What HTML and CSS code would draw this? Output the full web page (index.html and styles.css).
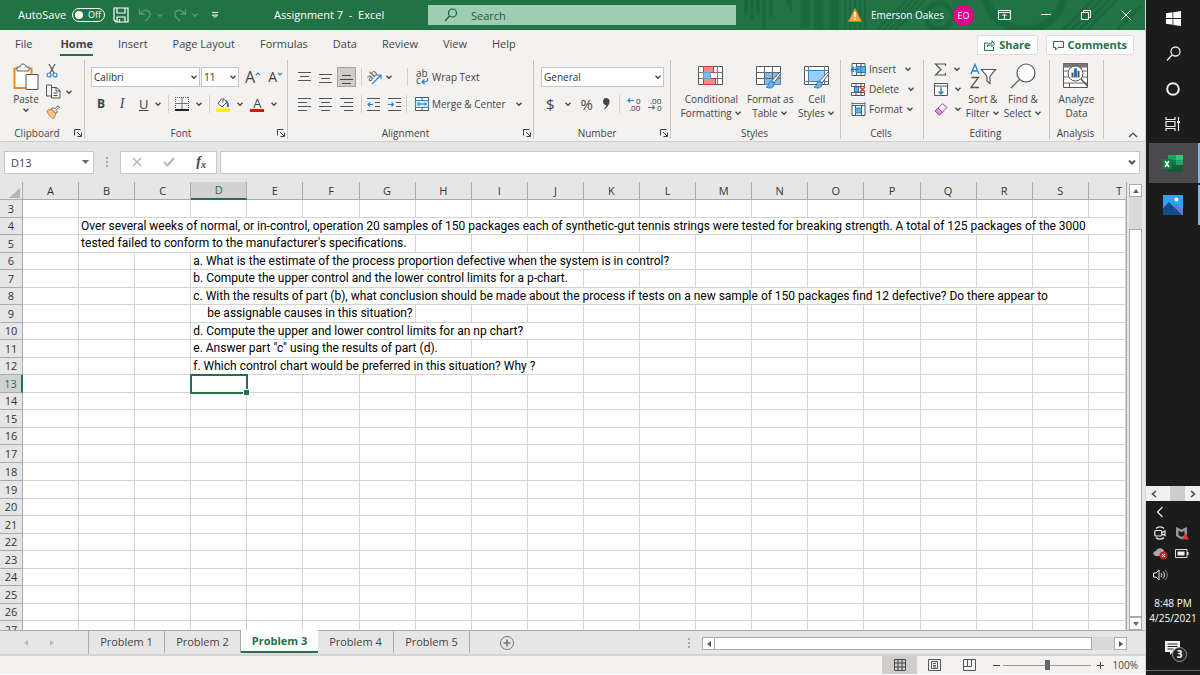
FILE: index.html
```html
<!DOCTYPE html>
<html lang="en">
<head>
<meta charset="utf-8">
<title>Assignment 7 - Excel</title>
<link rel="stylesheet" href="styles.css">
</head>
<body>
<svg class="defs" aria-hidden="true">
  <symbol id="chev" viewBox="0 0 8 8"><path d="M1.5 2.8 4 5.3 6.500 2.800" fill="none" stroke="currentColor" stroke-width="1.300"/></symbol>
  <symbol id="launch" viewBox="0 0 8 8"><path d="M.5 6.500V.5H6.500M3 3l4 4M7.500 3.500v4h-4" fill="none" stroke="currentColor"/></symbol>
  <symbol id="brush" viewBox="0 0 16 18"><path d="M15 1 7 9.500 9 12 16 2.500z" fill="#fff" stroke="#555"/><path d="M6.500 10c-3 0-2 5-5.500 6 4 2 8 1 8-3.500z" fill="#6fb1e8" stroke="#2078c0"/></symbol>
</svg>
<div class="desktop">
<div class="excel">
  <header class="title">
    <svg class="decor" viewBox="0 0 400 30" aria-hidden="true" fill="none" stroke="#1d673f">
      <path stroke-width="4" d="M5 0V15M11 0V20M17 0V15M23 0V29M30 0V17"/>
      <path d="M44 0 51 12V0z" fill="#1d673f" stroke="none"/>
      <path stroke-width="9" d="M64 0V28M78 0V30M93 0V30"/>
      <path stroke-width="2" d="M104 0V30M109 0V30M114 0V30M119 0V30M124 0V30"/>
      <path stroke-width="2" d="M136 30 166 0M142 30 172 0M148 30 178 0M154 30 184 0"/>
      <circle cx="198" cy="16" r="13" stroke-width="5"/><circle cx="198" cy="16" r="4" stroke-width="3"/>
      <circle cx="284" cy="-10" r="40" stroke-width="8"/>
      <path stroke-width="3" d="M322 30 352 0M330 30 360 0M338 30 368 0M346 30 376 0M376 30 400 6"/>
    </svg>
    <label class="autosave">AutoSave <input type="checkbox" class="sr"><span class="toggle"><i></i>Off</span></label>
    <button class="tb save" aria-label="Save"><svg width="16" height="16" viewBox="0 0 16 16" fill="none" stroke="currentColor" stroke-width="1.200"><path d="M1 1h14v14H3l-2-2zM4 1v5h8V1M4 15v-5h8v5M6.500 15v-3"/></svg></button>
    <button class="tb dim undo" aria-label="Undo"><svg width="14" height="14" viewBox="0 0 14 14" fill="none" stroke="currentColor" stroke-width="1.300"><path d="M1.500 1v5h5M2 6C5 2 9 1 11.500 4c2 3 0 5-4.500 9"/></svg><svg width="8" height="8"><use href="#chev"/></svg></button>
    <button class="tb dim redo" aria-label="Redo"><svg width="14" height="14" viewBox="0 0 14 14" fill="none" stroke="currentColor" stroke-width="1.300"><path d="M12.500 1v5h-5M12 6C9 2 5 1 2.500 4c-2 3 0 5 4.500 9"/></svg><svg width="8" height="8"><use href="#chev"/></svg></button>
    <button class="tb more" aria-label="Customize Quick Access Toolbar"><svg width="8" height="8" viewBox="0 0 8 8" fill="none" stroke="currentColor"><path d="M1 1.500h6M1.500 4 4 6.500 6.500 4z"/></svg></button>
    <h1>Assignment 7&nbsp; - &nbsp;Excel</h1>
    <label class="search"><svg width="14" height="14" viewBox="0 0 14 14" fill="none" stroke="#17633a" stroke-width="1.200"><circle cx="8.500" cy="5" r="4"/><path d="M5.500 8 1 13"/></svg><input type="text" placeholder="Search" aria-label="Search"></label>
    <div class="account">
      <svg width="14" height="14" viewBox="0 0 14 14"><path d="M7 .5 13.500 13.500H.5z" fill="#f7a34a" stroke="#e2711d"/><path d="M7 4v5M7 10.500v1.500" stroke="#fff" stroke-width="1.600"/></svg>
      <span>Emerson Oakes</span>
      <span class="avatar">EO</span>
    </div>
    <div class="winbtns">
      <button class="tb" aria-label="Ribbon Display Options"><svg width="13" height="11" viewBox="0 0 13 11" fill="none" stroke="currentColor"><path d="M.5.5h12v9H.5zM.5 2.500h12M6.500 9V4.500M4.500 6l2-2 2 2"/></svg></button>
      <button class="tb" aria-label="Minimize"><svg width="10" height="10" viewBox="0 0 10 10" stroke="currentColor"><path d="M0 4.500h10"/></svg></button>
      <button class="tb" aria-label="Restore"><svg width="10" height="10" viewBox="0 0 10 10" fill="none" stroke="currentColor"><path d="M.5 2.500h7v7h-7zM2.500 2.500v-2h7v7h-2"/></svg></button>
      <button class="tb" aria-label="Close"><svg width="10" height="10" viewBox="0 0 10 10" stroke="currentColor"><path d="M.5.5l9 9M9.500.5l-9 9"/></svg></button>
    </div>
  </header>

  <nav class="menu">
    <button class="file">File</button><button class="on">Home</button><button>Insert</button><button>Page Layout</button><button>Formulas</button><button>Data</button><button>Review</button><button>View</button><button>Help</button>
    <span class="grow"></span>
    <button class="act"><svg width="11" height="11" viewBox="0 0 11 11" fill="none" stroke="currentColor"><path d="M4 3H.5v7.500h9V7M3 7c.5-3 2-4 5-4V.8L10.500 4 8 6.500V5C6 5 4.500 5 3 7z"/></svg>Share</button>
    <button class="act"><svg width="11" height="11" viewBox="0 0 11 11" fill="none" stroke="currentColor"><path d="M.5 1.500h10v6H5l-2.500 2.500V7.500h-2z"/></svg>Comments</button>
  </nav>

  <section class="ribbon">
    <div class="group g-clip">
      <div class="body clip">
        <button class="big"><svg width="26" height="28" viewBox="0 0 26 28" fill="none"><path d="M1.500 5.500h17V25h-17z" fill="#fff" stroke="#e88b1c" stroke-width="2"/><path d="M4 8V4h3c0-4 6-4 6 0h3v4z" fill="#f3f2f1" stroke="#666"/><path d="M13 11.500h12v15H13z" fill="#fff" stroke="#555"/></svg><span>Paste</span><svg width="8" height="8"><use href="#chev"/></svg></button>
        <div class="stack">
          <button aria-label="Cut"><svg width="12" height="15" viewBox="0 0 12 15" fill="none"><path d="M3 1l5 9M9 1l-5 9" stroke="#555" stroke-width="1.200"/><circle cx="3" cy="12" r="2" stroke="#2a86cf" stroke-width="1.200"/><circle cx="9" cy="12" r="2" stroke="#2a86cf" stroke-width="1.200"/></svg></button>
          <button aria-label="Copy"><svg width="15" height="15" viewBox="0 0 15 15" fill="#f3f2f1" stroke="#555"><path d="M.5 1h5v11h-5zM5.500 3.500h5l3.500 3V14H5.500zM10 3.500v3.500h4M7.500 9h4M7.500 11.500h4"/></svg><svg class="gap near" width="8" height="8"><use href="#chev"/></svg></button>
          <button aria-label="Format Painter"><svg width="14" height="14" viewBox="0 0 14 14"><path d="M1 5.500 6 4l4 4-2 5.500C5 13 2 10 1 5.500z" fill="#f9c48a" stroke="#e2811d"/><path d="M5.500 4 10 8.500 11.500 7 10 5.500 13.500 2 12 .8 8.500 4 7 2.500z" fill="#fff" stroke="#555"/></svg></button>
        </div>
      </div>
      <div class="name"><span>Clipboard</span><button aria-label="Clipboard settings"><svg width="8" height="8"><use href="#launch"/></svg></button></div>
    </div>

    <div class="group g-font">
      <div class="body rows">
        <div class="row fr1">
          <span class="sel s-font"><select aria-label="Font"><option>Calibri</option></select><svg width="8" height="8"><use href="#chev"/></svg></span>
          <span class="sel s-size"><select aria-label="Font size"><option>11</option></select><svg width="8" height="8"><use href="#chev"/></svg></span>
          <button class="lg" aria-label="Increase font size"><span>A</span><svg width="6" height="12" viewBox="0 0 6 12" fill="none" stroke="#2a86cf" stroke-width="1.200"><path d="M1 4l2-2 2 2"/></svg></button>
          <button class="md" aria-label="Decrease font size"><span>A</span><svg width="6" height="12" viewBox="0 0 6 12" fill="none" stroke="#2a86cf" stroke-width="1.200"><path d="M1 2l2 2 2-2"/></svg></button>
        </div>
        <div class="row fr2">
          <button class="b">B</button><button class="i">I</button><button><u>U</u></button><button aria-label="Underline options"><svg width="8" height="8"><use href="#chev"/></svg></button>
          <i class="sep"></i>
          <button aria-label="Borders"><svg width="14" height="14" viewBox="0 0 14 14" fill="none" stroke="#555"><path d="M.5 0v13M13.500 0v13M0 .5h14" stroke-dasharray="1 1"/><path d="M7 0v13M0 6.500h14" stroke="#777"/><path d="M0 13h14" stroke="#222" stroke-width="2"/></svg></button><button aria-label="Border options"><svg width="8" height="8"><use href="#chev"/></svg></button>
          <i class="sep"></i>
          <button aria-label="Fill color"><svg width="14" height="15" viewBox="0 0 14 15" fill="none"><path d="M6 1.500 2 6.500l4 3.500 5-5-4-3.500v4" fill="#fff" stroke="#555"/><path d="M10 4c2 1 2 3 2 6" stroke="#2a72b8" stroke-width="2"/><path d="M0 11.500h14v3.500H0z" fill="#fff200"/></svg></button><button aria-label="Fill options"><svg width="8" height="8"><use href="#chev"/></svg></button>
          <button class="fc" aria-label="Font color"><span>A</span></button><button aria-label="Font color options"><svg width="8" height="8"><use href="#chev"/></svg></button>
        </div>
      </div>
      <div class="name"><span>Font</span><button aria-label="Font settings"><svg width="8" height="8"><use href="#launch"/></svg></button></div>
    </div>

    <div class="group g-align">
      <div class="body rows">
        <div class="row al">
          <button aria-label="Top align"><svg width="13" height="13" viewBox="0 0 13 13" stroke="#555"><path d="M0 1.500h13M2 5.500h9M0 9.500h13"/></svg></button>
          <button aria-label="Middle align"><svg width="13" height="13" viewBox="0 0 13 13" stroke="#555"><path d="M0 3.500h13M2 7.500h9M0 11.500h13"/></svg></button>
          <button class="pressed" aria-label="Bottom align"><svg width="13" height="13" viewBox="0 0 13 13" stroke="#444"><path d="M2 4.500h9M0 8.500h13M2 12.500h9"/></svg></button>
          <i class="sep"></i>
          <button aria-label="Orientation"><svg width="16" height="16" viewBox="0 0 16 16" fill="none"><text x="0" y="10" font-size="10" fill="#444" transform="rotate(-45 5 8)">ab</text><path d="M5 15 14 6M10 6h4v4" stroke="#2a86cf" stroke-width="1.200"/></svg></button><button aria-label="Orientation options"><svg width="8" height="8"><use href="#chev"/></svg></button>
          <i class="sep s2"></i>
          <button class="txt wrap"><svg width="13" height="16" viewBox="0 0 13 16" fill="none"><text x="0" y="8" font-size="10" fill="#444">ab</text><text x="0" y="15" font-size="10" fill="#444">c</text><path d="M11.500 9c1 4-2 4-5 4M8.500 10.500 6 13l2.500 2" stroke="#2a86cf" stroke-width="1.300"/></svg>Wrap Text</button>
        </div>
        <div class="row al">
          <button aria-label="Align left"><svg width="13" height="13" viewBox="0 0 13 13" stroke="#555"><path d="M0 .5h13M0 4.500h9M0 8.500h13M0 12.500h9"/></svg></button>
          <button aria-label="Center"><svg width="13" height="13" viewBox="0 0 13 13" stroke="#555"><path d="M0 .5h13M2 4.500h9M0 8.500h13M2 12.500h9"/></svg></button>
          <button aria-label="Align right"><svg width="13" height="13" viewBox="0 0 13 13" stroke="#555"><path d="M0 .5h13M4 4.500h9M0 8.500h13M4 12.500h9"/></svg></button>
          <i class="sep"></i>
          <button aria-label="Decrease indent"><svg width="14" height="13" viewBox="0 0 14 13" fill="none" stroke="#555"><path d="M0 .5h13M8 4.500h5M8 8.500h5M0 12.500h13"/><path d="M6 6.500H1M3 4.500l-2 2 2 2" stroke="#2a86cf" stroke-width="1.200"/></svg></button>
          <button class="ind" aria-label="Increase indent"><svg width="14" height="13" viewBox="0 0 14 13" fill="none" stroke="#555"><path d="M0 .5h13M8 4.500h5M8 8.500h5M0 12.500h13"/><path d="M0 6.500h5.500M3.500 4.500l2 2-2 2" stroke="#2a86cf" stroke-width="1.200"/></svg></button>
          <i class="sep s3"></i>
          <button class="txt"><svg width="14" height="14" viewBox="0 0 14 14" fill="none"><path d="M.5.5h13v13H.5zM7 .5v13" fill="#fff" stroke="#555"/><path d="M.5 3.500h13v7H.5z" fill="#d6eafa" stroke="#2a86cf"/><path d="M2.500 7h9M4.500 5l-2 2 2 2M9.500 5l2 2-2 2" stroke="#2078c0"/></svg>Merge &amp; Center<svg class="gap" width="8" height="8"><use href="#chev"/></svg></button>
        </div>
      </div>
      <div class="name"><span>Alignment</span><button aria-label="Alignment settings"><svg width="8" height="8"><use href="#launch"/></svg></button></div>
    </div>

    <div class="group g-num">
      <div class="body rows">
        <div class="row"><span class="sel s-num"><select aria-label="Number format"><option>General</option></select><svg width="8" height="8"><use href="#chev"/></svg></span></div>
        <div class="row nr">
          <button class="sym">$</button><button aria-label="Currency options"><svg width="8" height="8"><use href="#chev"/></svg></button><button class="sym">%</button><button aria-label="Comma style"><svg width="8" height="12" viewBox="0 0 8 12"><path d="M4 0c4 0 4 4 3 6S3.500 11 1.500 12C3.500 9 4.500 8 4 7 0 7 0 0 4 0z" fill="#444"/></svg></button>
          <i class="sep"></i>
          <button aria-label="Increase decimal"><svg width="14" height="16" viewBox="0 0 14 16" fill="none"><text x="9" y="8" font-size="8" fill="#333">0</text><text x="2" y="15" font-size="8" fill="#333">.00</text><path d="M7 4.500H1M3 2.500l-2 2 2 2" stroke="#2a86cf" stroke-width="1.200"/></svg></button>
          <button aria-label="Decrease decimal"><svg width="14" height="16" viewBox="0 0 14 16" fill="none"><text x="2" y="8" font-size="8" fill="#333">.00</text><text x="9" y="15" font-size="8" fill="#333">0</text><path d="M0 11.500h6.500M4.500 9.500l2 2-2 2" stroke="#2a86cf" stroke-width="1.200"/></svg></button>
        </div>
      </div>
      <div class="name"><span>Number</span><button aria-label="Number settings"><svg width="8" height="8"><use href="#launch"/></svg></button></div>
    </div>

    <div class="group g-style">
      <div class="body bigs">
        <button class="big"><svg width="26" height="24" viewBox="0 0 26 24" fill="none"><path d="M.5 1.500h24v18H.5z" fill="#fff" stroke="#555"/><path d="M.5 7.500h24M.5 13.500h24M5.500 1v19M19.500 1v19" stroke="#777"/><path d="M5.500 1.500h10v6h-10zM5.500 13.500h12v6h-12z" fill="#f98b8b" stroke="#e0352f"/><path d="M5.500 7.500h7v6h-7z" fill="#7cc0f3" stroke="#5fa6d8"/></svg><span>Conditional<br>Formatting <svg width="8" height="8"><use href="#chev"/></svg></span></button>
        <button class="big"><svg width="28" height="24" viewBox="0 0 28 24" fill="none"><path d="M.5 1.500h24v18H.5z" fill="#fff" stroke="#555"/><path d="M8.500 7.500h16v12h-16z" fill="#7cbcf0"/><path d="M.5 7.500h24M.5 13.500h24M8.500 1v19M16.500 1v19" stroke="#666"/><use href="#brush" x="8" y="6" width="18" height="18"/></svg><span>Format as<br>Table <svg width="8" height="8"><use href="#chev"/></svg></span></button>
        <button class="big"><svg width="28" height="24" viewBox="0 0 28 24" fill="none"><path d="M1.500 1.500h24v18h-24z" fill="#fff" stroke="#555"/><path d="M1 5.500h25M1 16.500h25M5.500 1v19M21.500 1v19" stroke="#777"/><path d="M5.500 5.500h16v11h-16z" fill="#9acdf5" stroke="#2a86cf"/><use href="#brush" x="9" y="6" width="18" height="18"/></svg><span>Cell<br>Styles <svg width="8" height="8"><use href="#chev"/></svg></span></button>
      </div>
      <div class="name"><span>Styles</span></div>
    </div>

    <div class="group g-cells">
      <div class="body list">
        <button class="txt"><svg width="15" height="13" viewBox="0 0 15 13" fill="none"><path d="M1 .5h13v12H1zM5.500.5v12M10 .5v12" fill="#fff" stroke="#555"/><path d="M5 3.500h9.500v6H5z" fill="#5fb0ee" stroke="#2078c0"/><path d="M10 3.500v6" stroke="#2078c0"/><path d="M0 6.500h8M3 4 .5 6.500 3 9" stroke="#2078c0" stroke-width="1.300"/></svg>Insert<svg class="gap wide" width="8" height="8"><use href="#chev"/></svg></button>
        <button class="txt"><svg width="15" height="13" viewBox="0 0 15 13" fill="none"><path d="M.5.5h13v3H.5zM.5 9.500h13v3H.5zM5 .5v3M10 .5v3M5 9.500v3M10 9.500v3" fill="#fff" stroke="#555"/><path d="M3.500 4h4v5h-4z" fill="#5fb0ee" stroke="#2078c0"/><path d="M9 4l5 5M14 4 9 9" stroke="#e0352f" stroke-width="1.400"/></svg>Delete<svg class="gap wide" width="8" height="8"><use href="#chev"/></svg></button>
        <button class="txt"><svg width="15" height="14" viewBox="0 0 15 14" fill="none"><path d="M1 3.500h13v10H1zM4.500 3.500v10M10.500 3.500v10" fill="#fff" stroke="#555"/><path d="M4.500 6h6v5h-6z" fill="#5fb0ee" stroke="#2078c0"/><path d="M1 1.500h13M1 0v3M14 0v3" stroke="#2a86cf"/></svg>Format<svg width="8" height="8"><use href="#chev"/></svg></button>
      </div>
      <div class="name"><span>Cells</span></div>
    </div>

    <div class="group g-edit">
      <div class="body bigs">
        <div class="list tools">
          <button aria-label="AutoSum"><svg width="13" height="13" viewBox="0 0 13 13" fill="none" stroke="#555" stroke-width="1.200"><path d="M11.500 3V1H1.500L7 6.500 1.500 12h10v-2"/></svg><svg width="8" height="8"><use href="#chev"/></svg></button>
          <button aria-label="Fill"><svg width="14" height="13" viewBox="0 0 14 13" fill="none"><path d="M.5.5h13v12H.5zM.5 3h13" fill="#fff" stroke="#555"/><path d="M7 4v7M4.500 8.500 7 11l2.500-2.500" stroke="#2078c0" stroke-width="1.300"/></svg><svg width="8" height="8"><use href="#chev"/></svg></button>
          <button aria-label="Clear"><svg width="14" height="13" viewBox="0 0 14 13"><path d="M1 8 8.500.8 13 4.500 5.500 12z" fill="#fff" stroke="#9b3fa8"/><path d="M1 8l3-3 4.500 4-3 3z" fill="#d79be0" stroke="#9b3fa8"/></svg><svg width="8" height="8"><use href="#chev"/></svg></button>
        </div>
        <button class="big"><svg width="26" height="26" viewBox="0 0 26 26" fill="none" stroke="#555"><path d="M1 11 5 1.500 9 11M2.500 8h5" stroke="#2a86cf" stroke-width="1.300"/><path d="M1.500 14.500h7L1 24.500h8" stroke-width="1.300"/><path d="M11.500 6.500h14l-5.500 7v7l-3-2.500v-4.500z" fill="#fff" stroke-width="1.200"/></svg><span>Sort &amp;<br>Filter <svg width="8" height="8"><use href="#chev"/></svg></span></button>
        <button class="big"><svg width="28" height="26" viewBox="0 0 28 26" fill="none" stroke="#555" stroke-width="1.200"><circle cx="17" cy="10" r="9" fill="#fff"/><path d="M10.500 16.500 2 25"/></svg><span>Find &amp;<br>Select <svg width="8" height="8"><use href="#chev"/></svg></span></button>
      </div>
      <div class="name"><span>Editing</span></div>
    </div>

    <div class="group g-ana">
      <div class="body bigs">
        <button class="big"><svg width="26" height="26" viewBox="0 0 26 26" fill="none"><path d="M.5.5h24v24H.5z" fill="#fff" stroke="#555"/><path d="M.5 2.500h24" stroke="#777" stroke-width="4"/><path d="M.5 8h24M.5 14h24M.5 20h24M6.500 20v5M18.500 4v4" stroke="#666"/><circle cx="12.500" cy="10.500" r="7.500" fill="#fff" stroke="#555"/><path d="M9.500 9.500v5" stroke="#555" stroke-width="2"/><path d="M12.500 5.500v9" stroke="#2078c0" stroke-width="3"/><path d="M15.500 8v6.500" stroke="#555" stroke-width="2"/><path d="M18 16l6.500 7" stroke="#555" stroke-width="1.500"/></svg><span>Analyze<br>Data</span></button>
      </div>
      <div class="name"><span>Analysis</span></div>
    </div>
    <button class="collapse" aria-label="Collapse the Ribbon"><svg width="10" height="8" viewBox="0 0 10 8" fill="none" stroke="#444" stroke-width="1.200"><path d="M1 6l4-4 4 4"/></svg></button>
  </section>

  <section class="fbar">
    <div class="namebox"><input type="text" value="D13" aria-label="Name box"><svg width="8" height="5" viewBox="0 0 8 5"><path d="M1 0h7L4.500 4z" fill="#666"/></svg></div>
    <span class="dots"></span>
    <div class="fx">
      <button aria-label="Cancel"><svg width="10" height="10" viewBox="0 0 10 10" stroke="#b5b5b5" stroke-width="1.500"><path d="M1 1l8 8M9 1 1 9"/></svg></button>
      <button aria-label="Enter"><svg width="12" height="10" viewBox="0 0 12 10" fill="none" stroke="#b5b5b5" stroke-width="2"><path d="M1 5l3.500 3.500L11 1"/></svg></button>
      <button class="fn" aria-label="Insert function">f<small>x</small></button>
    </div>
    <div class="formula"><input type="text" aria-label="Formula bar"><svg width="8" height="8" viewBox="0 0 8 8"><path d="M1 2.500 4 5.500l3-3" fill="none" stroke="#555" stroke-width="2"/></svg></div>
  </section>

  <main class="sheet">
    <div class="gridwrap"><table class="grid" id="grid"></table></div>
    <div class="vscroll">
      <button aria-label="Scroll up"><svg width="6" height="4"><path d="M0 4h6L3 0z" fill="#666"/></svg></button>
      <div class="vtrack"><div class="vthumb"></div></div>
      <button aria-label="Scroll down"><svg width="6" height="4"><path d="M0 0h6L3 4z" fill="#666"/></svg></button>
    </div>
  </main>

  <footer class="tabs">
    <div class="arrows"><button aria-label="Previous sheet"><svg width="4" height="6"><path d="M4 0v6L0 3z" fill="#b8b8b8"/></svg></button><button aria-label="Next sheet"><svg width="4" height="6"><path d="M0 0v6l4-3z" fill="#b8b8b8"/></svg></button></div>
    <button class="tab">Problem 1</button><button class="tab">Problem 2</button><button class="tab on">Problem 3</button><button class="tab">Problem 4</button><button class="tab">Problem 5</button>
    <button class="add" aria-label="New sheet"><svg width="14" height="14" viewBox="0 0 14 14" fill="none" stroke="#777"><circle cx="7" cy="7" r="6.500"/><path d="M3.500 7h7M7 3.500v7" stroke-width="1.600"/></svg></button>
    <span class="grow"></span>
    <span class="dots"></span>
    <div class="hscroll"><button aria-label="Scroll left"><svg width="4" height="6"><path d="M4 0v6L0 3z" fill="#555"/></svg></button><div class="hthumb"></div><span class="htrack"></span><button aria-label="Scroll right"><svg width="4" height="6"><path d="M0 0v6l4-3z" fill="#555"/></svg></button></div>
  </footer>

  <div class="status">
    <button class="view on" aria-label="Normal"><svg width="12" height="12" viewBox="0 0 12 12" fill="none" stroke="#444"><path d="M.5.5h11v11H.5zM4 0v12M8 0v12M0 4h12M0 8h12"/></svg></button>
    <button class="view" aria-label="Page Layout"><svg width="13" height="12" viewBox="0 0 13 12" fill="none" stroke="#555"><path d="M.5.5h12v11H.5zM3.500 2.500h6v7h-6zM5 4.500h3M5 6.500h3M5 8h3"/></svg></button>
    <button class="view" aria-label="Page Break Preview"><svg width="13" height="12" viewBox="0 0 13 12" fill="none" stroke="#555"><path d="M.5.5h12v11H.5zM.5 7.500h8V.5M4.500 0v7"/></svg></button>
    <button class="zm" aria-label="Zoom out"><svg width="7" height="7"><path d="M0 3.500h7" stroke="#444"/></svg></button>
    <input type="range" aria-label="Zoom" min="0" max="100" value="50">
    <button class="zm" aria-label="Zoom in"><svg width="7" height="7"><path d="M0 3.500h7M3.500 0v7" stroke="#444"/></svg></button>
    <span class="pct">100%</span>
  </div>
</div>

<aside class="taskbar">
  <button class="task" aria-label="Start"><svg width="15" height="15" viewBox="0 0 15 15" fill="#fff"><path d="M0 2.200 6.500 1.300V7H0zM7.300 1.200 15 0v7H7.300zM0 8h6.500v5.700L0 12.800zM7.300 8H15v7l-7.700-1.100z"/></svg></button>
  <button class="task" aria-label="Search"><svg width="15" height="15" viewBox="0 0 15 15" fill="none" stroke="#eee" stroke-width="1.300"><circle cx="9.500" cy="5.500" r="4.500"/><path d="M6 9 1 14.500"/></svg></button>
  <button class="task" aria-label="Cortana"><svg width="14" height="14" viewBox="0 0 14 14" fill="none" stroke="#eee" stroke-width="2"><circle cx="7" cy="7" r="5.800"/></svg></button>
  <button class="task" aria-label="Task View"><svg width="16" height="14" viewBox="0 0 16 14" fill="none" stroke="#eee" stroke-width="1.200"><path d="M1 4.500h9v5H1zM1 0v2.500h9V0M1 14v-2.500h9V14M13.500 0v14"/><path d="M12 5h3" stroke-width="2"/></svg></button>
  <button class="task app on" aria-label="Excel"><svg width="21" height="19" viewBox="0 0 21 19"><path d="M6 1h15v17H6z" fill="#185c37"/><path d="M6 1h8v9H6z" fill="#21a366"/><path d="M14 1h7v5h-7z" fill="#33c481"/><path d="M14 6h7v5h-7z" fill="#21a366"/><path d="M6 6h8v5H6z" fill="#107c41"/><path d="M0 5h10v10H0z" fill="#107c41"/><path d="M3 7l4 6M7 7l-4 6" stroke="#fff" stroke-width="1.500"/></svg></button>
  <button class="task app" aria-label="Photos"><svg width="20" height="20" viewBox="0 0 20 20"><path d="M0 0h20v20H0z" fill="#2ba5f0"/><path d="M10 13l4-4 6 6v5H8z" fill="#6a74d8"/><path d="M0 13 6 7l13 13H0z" fill="#134a8e"/><circle cx="13.500" cy="4.500" r="2" fill="#fff"/></svg></button>
  <span class="grow"></span>
  <div class="pan"><button aria-label="Pan left"><svg width="6" height="8" viewBox="0 0 6 8" fill="none" stroke="#444" stroke-width="1.500"><path d="M5 1 1.500 4 5 7"/></svg></button><i></i><button aria-label="Pan right"><svg width="6" height="8" viewBox="0 0 6 8" fill="none" stroke="#444" stroke-width="1.500"><path d="M1 1l3.500 3L1 7"/></svg></button></div>
  <div class="tray">
    <button aria-label="Hidden icons"><svg width="12" height="12" viewBox="0 0 12 12" fill="none" stroke="#eee" stroke-width="1.200"><path d="M8.500 1 3.500 6l5 5"/></svg></button><i></i>
    <button aria-label="Meet Now"><svg width="12" height="14" viewBox="0 0 12 14" fill="none" stroke="#eee" stroke-width="1.200"><rect x=".8" y="4.500" width="7" height="5.500" rx="1"/><path d="M8 6.500l3-1.500v4.500L8 8M2 2.500C4 .3 8 .3 10 2.500M2 11.500c2 2.200 6 2.200 8 0"/></svg></button>
    <button aria-label="McAfee"><svg width="14" height="14" viewBox="0 0 14 14"><path d="M1 1l5.500 2.500L12 1v9l-5.500 3.500L1 10zM3.500 4.800V9l3 2 3-2V4.800l-3 1.400z" fill="#999" fill-rule="evenodd"/><path d="M10.500 7 14 13.500H7z" fill="#f02c2c"/></svg></button>
    <button aria-label="OneDrive"><svg width="15" height="13" viewBox="0 0 15 13"><path d="M3 9C-1 8 0 4 3 4c2-4 7-3 8 0v5z" fill="#aaa"/><circle cx="10.500" cy="8.500" r="4" fill="#e81123"/><path d="M9 7l3 3M12 7 9 10" stroke="#fff"/></svg></button>
    <button aria-label="Battery"><svg width="14" height="9" viewBox="0 0 14 9"><path d="M.5.5h11.500v8H.5z" fill="none" stroke="#ddd"/><path d="M2.500 2.500h7v4h-7zM12 3h1.500v3H12z" fill="#eee"/></svg></button>
    <button aria-label="Volume"><svg width="15" height="12" viewBox="0 0 15 12" fill="none" stroke="#eee"><path d="M.5 4h2.500l3-3v10L3 8H.5zM8 4c1 1 1 3 0 4M10 2.500c2 2 2 5 0 7"/><path d="M12 1c3 3 3 7 0 10" stroke="#888"/></svg></button><i></i>
  </div>
  <div class="clock"><span>8:48 PM</span><span>4/25/2021</span></div>
  <button class="notes" aria-label="Notifications"><svg width="16" height="14" viewBox="0 0 16 14"><path d="M0 0h15v11H8l-3 3v-3H0z" fill="#f4f4f4"/><path d="M2.500 3h10M2.500 5.500h10M2.500 8h6" stroke="#222"/></svg><b>3</b></button>
  <span class="peek"></span>
</aside>
</div>
<script src="script.js"></script>
</body>
</html>
```
FILE: styles.css
```css
* { box-sizing: border-box; }
body { margin: 0; font: 11px/14px "Open Sans", "Noto Sans", sans-serif; color: #444; background: #fff; }
button, input, select { font: inherit; color: inherit; margin: 0; padding: 0; border: 0; background: none; outline: none; border-radius: 0; }
button { display: flex; align-items: center; justify-content: center; white-space: nowrap; flex: none; }
svg { flex: none; display: block; overflow: visible; }
.defs { display: none; }
.sr { position: absolute; opacity: 0; }
.grow { flex: 1; }
.desktop { display: flex; height: 100vh; overflow: hidden; }
.excel { flex: 1; min-width: 0; display: flex; flex-direction: column; border-right: 1px solid #d8d8d8; }

/* title bar */
.title { position: relative; height: 30px; background: #217346; color: #fff; display: flex; align-items: center; flex: none; padding-left: 18px; }
.decor { position: absolute; right: 4px; top: 0; width: 400px; height: 30px; overflow: hidden; }
.title > :not(.decor) { position: relative; }
.autosave { display: flex; align-items: center; gap: 6px; width: 95px; }
.toggle { display: flex; align-items: center; gap: 5px; width: 33px; height: 14px; border: 1px solid #fff; border-radius: 7px; padding-left: 2px; font-size: 9px; }
.toggle i { width: 8px; height: 8px; border-radius: 50%; background: #fff; }
.tb { gap: 4px; }
.tb.dim { color: #5a9a76; }
.undo { margin-left: 9px; }
.redo { margin-left: 9px; }
.more { margin-left: 12px; }
.title h1 { font: inherit; margin: 0 0 0 55px; width: 154px; white-space: nowrap; }
.search { display: flex; align-items: center; gap: 13px; flex: 0 1 308px; height: 20px; padding-left: 16px; background: #9fcdb3; }
.search input { flex: 1; min-width: 0; height: 20px; }
.search input::placeholder { color: #17633a; opacity: 1; }
.account { margin-left: auto; display: flex; align-items: center; gap: 9px; font-size: 10px; }
.avatar { width: 21px; height: 21px; border-radius: 50%; background: #e3008c; font-size: 9px; line-height: 21px; text-align: center; }
.winbtns { display: flex; align-items: center; gap: 30px; padding: 0 14px 0 24px; }

/* ribbon tabs */
.menu { height: 30px; background: #f3f2f1; display: flex; align-items: center; flex: none; padding: 0 11px 0 15px; gap: 25px; }
.menu button { height: 22px; border-bottom: 2px solid transparent; }
.menu .file { margin-right: 3px; }
.menu .on { font-weight: bold; border-color: #217346; color: #444; }
.menu .act { height: 20px; background: #fff; border: 1px solid #e1dfdd; border-radius: 2px; color: #217346; font-weight: bold; gap: 4px; padding: 0 6px; }
.act + .act { margin-left: -17px; }

/* ribbon */
.ribbon { height: 82px; background: #f3f2f1; border-bottom: 1px solid #cfcdcb; display: flex; flex: none; padding-bottom: 2px; font-size: 10px; }
.group { display: flex; flex-direction: column; justify-content: space-between; border-right: 1px solid #c8c6c4; flex: none; }
.g-clip { width: 85px; }
.g-font { width: 203px; }
.g-align { width: 246px; }
.g-num { width: 137px; }
.g-style { width: 170px; }
.g-cells { width: 83px; }
.g-edit { width: 126px; }
.g-ana { width: 54px; }
.name { display: flex; align-items: center; height: 12px; line-height: 12px; padding: 0 2px 0 0; }
.name span { flex: 1; text-align: center; }
.collapse { margin-left: auto; align-self: flex-end; margin-right: 7px; }
.rows { padding-top: 7px; display: flex; flex-direction: column; gap: 7px; }
.row { display: flex; align-items: center; height: 20px; }
.sep { width: 1px; height: 18px; background: #d2d0ce; flex: none; }
.gap { margin-left: 6px; }
.near { margin-left: 4px; }
.wide { margin-left: 5px; }
.txt { gap: 3px; }
.big { flex-direction: column; justify-content: flex-start; line-height: 14px; }
.big span { text-align: center; }
.big span svg { display: inline-block; }
.big > svg + span { margin-top: 3px; }
.clip { display: flex; padding: 3px 0 0 13px; gap: 7px; }
.clip .big > svg + span { margin-top: 1px; }
.stack { display: flex; flex-direction: column; gap: 6px; align-items: flex-start; }
.sel { position: relative; height: 20px; }
.sel select { appearance: none; width: 100%; height: 20px; border: 1px solid #c8c6c4; background: #fff; padding: 0 2px; color: #333; }
.sel svg { position: absolute; right: 2px; top: 6px; pointer-events: none; }
.s-font { width: 109px; }
.s-size { width: 38px; }
.s-num { width: 123px; margin-left: 7px; }
.fr1 { padding-left: 6px; gap: 1px; }
.lg { font-size: 16px; margin-left: 5px; }
.md { font-size: 14px; margin-left: 6px; }
.fr2 { padding-left: 12px; gap: 6px; }
.fr2 .b { font-weight: bold; width: 8px; font-size: 12px; margin-right: 7px; }
.fr2 .i { font: italic 14px "Liberation Serif", serif; width: 8px; margin-right: 7px; }
.fr2 u { font-size: 13px; }
.fc { width: 14px; height: 15px; border-bottom: 3px solid #f00; font-size: 13px; line-height: 12px; }
.al { padding-left: 7px; gap: 2px; }
.al > button:not(.txt) { min-width: 8px; }
.al > button[aria-label*="align"], .al > button[aria-label*="Align"], .al > button[aria-label="Center"] { width: 19px; height: 20px; }
.al .pressed { background: #cfcdcb; border: 1px solid #a5a3a1; }
.al .sep { margin: 0 3px; }
.al .s2 { margin-left: 12px; margin-right: 6px; }
.al .s3 { margin-left: 2px; margin-right: 6px; }
.ind { margin-left: 5px; }
.nr { padding-left: 12px; gap: 9px; }
.nr .sym { font-size: 15px; }
.nr .sep { margin: 0 -2px 0 0; }
.nr .sep ~ button { margin-right: -2px; }
.bigs { display: flex; justify-content: space-evenly; padding-top: 3px; }
.g-style .bigs { padding: 5px 0 0 5px; }
.g-edit .bigs { padding: 3px 3px 0 6px; }
.list { display: flex; flex-direction: column; gap: 6px; align-items: flex-start; }
.g-cells .list { padding-top: 2px; padding-left: 10px; }
.list > button { height: 14px; }
.g-edit .tools { margin-top: -1px; }
.tools > button { gap: 6px; }

/* formula bar */
.fbar { height: 40px; background: #e6e6e6; display: flex; align-items: center; flex: none; padding: 0 5px 0 4px; }
.namebox, .fx, .formula { display: flex; align-items: center; height: 23px; background: #fff; border: 1px solid #c6c6c6; }
.namebox { width: 90px; padding: 0 4px 0 6px; }
.namebox input, .formula input { flex: 1; min-width: 0; height: 20px; }
.dots { width: 2px; height: 10px; border-left: 2px dotted #a8a8a8; margin: 0 12px; }
.fx { width: 97px; justify-content: space-between; padding: 0 10px 0 11px; }
.fn { font: italic bold 14px "Liberation Serif", serif; }
.fn small { font-size: 10px; align-self: flex-end; }
.formula { flex: 1; margin-left: 3px; padding-right: 3px; }

/* sheet */
.sheet { flex: 1; min-height: 0; display: flex; background: #e6e6e6; }
.gridwrap { flex: 1; min-width: 0; overflow: hidden; border-right: 1px solid #ababab; }
.grid { width: 100%; table-layout: fixed; border-collapse: separate; border-spacing: 0; background: #fff; }
.grid th, .grid td { padding: 0; height: 17px; line-height: 16px; border: 0 solid #d4d4d4; border-width: 0 1px 1px 0; }
.grid tbody tr:nth-child(odd) > *, .grid tbody tr:nth-child(16n) > * { height: 18px; line-height: 17px; }
.grid td { font-family: Roboto, sans-serif; font-size: 12px; color: #000; white-space: nowrap; padding-left: 2px; }
.grid .indent { padding-left: 16px; }
.grid th { font-weight: normal; background: #e6e6e6; border-color: #ababab; color: #333; }
.grid thead th { height: 18px; line-height: 16px; }
.grid thead .on { background: #d2d2d2; color: #217346; border-bottom: 2px solid #217346; }
.grid tbody th.on { background: #d2d2d2; color: #217346; border-right: 2px solid #217346; }
.grid .corner { width: 23px; }
.grid .corner svg { margin: 4px 0 0 9px; }
.grid .last { width: 37px; border-right: 0; text-align: right; padding-right: 4px; }
.grid .cur { position: relative; outline: 2px solid #217346; outline-offset: -1px; }
.grid .cur::after { content: ""; position: absolute; right: -3px; bottom: -3px; width: 5px; height: 5px; background: #217346; border: 1px solid #fff; border-width: 1px 0 0 1px; }
.vscroll { width: 18px; display: flex; flex-direction: column; padding: 2px 3px 0 2px; }
.vscroll button { height: 13px; background: #fff; border: 1px solid #ababab; }
.vtrack { flex: 1; background: #d9d9d9; padding-top: 32px; }
.vthumb { height: 100%; background: #fff; border: 1px solid #ababab; }

/* sheet tabs */
.tabs { height: 26px; flex: none; display: flex; align-items: flex-start; background: #e6e6e6; border-top: 1px solid #ababab; border-bottom: 2px solid #d4d4d4; padding-right: 18px; }
.arrows { width: 89px; height: 23px; display: flex; gap: 22px; padding-left: 24px; border-right: 1px solid #ababab; }
.tab { width: 76px; height: 22px; border-right: 1px solid #ababab; }
.tab.on { width: 77px; background: #fff; color: #217346; font-weight: bold; border: 0; border-bottom: 2px solid #217346; margin-top: -1px; height: 23px; }
.add { width: 73px; height: 23px; }
.tabs .dots { margin-top: 7px; }
.hscroll { flex: 0 1 425px; display: flex; height: 13px; margin-top: 6px; }
.hscroll button { width: 13px; background: #fff; border: 1px solid #ababab; }
.hthumb { flex: 1; background: #fff; border: 1px solid #ababab; border-left: 0; }
.htrack { width: 22px; background: #d9d9d9; }

/* status bar */
.status { height: 19px; flex: none; display: flex; align-items: stretch; justify-content: flex-end; background: #f3f2f1; border-bottom: 1px solid #fff; padding-right: 7px; }
.view { width: 35px; }
.view.on { background: #cfcdcb; }
.zm { width: 12px; margin-left: 3px; }
.status input { appearance: none; width: 88px; margin: 0 0 0 1px; }
.status input::-webkit-slider-runnable-track { height: 10px; background: linear-gradient(#999, #999) center / 100% 1px no-repeat; }
.status input::-webkit-slider-thumb { appearance: none; width: 5px; height: 10px; background: #666; }
.pct { width: 32px; line-height: 18px; font-size: 10px; text-align: right; }

/* taskbar */
.taskbar { width: 54px; flex: none; display: flex; flex-direction: column; background: #1c1c1c; color: #fff; padding-top: 1px; }
.task { height: 35px; }
.task.app { height: 40px; margin-left: 3px; padding-right: 2px; border-right: 2px solid #76b9ed; }
.task.app.on { background: #4a4a4c; margin-top: 2px; margin-bottom: 2px; }
.pan { height: 15px; background: #f0f0f0; display: flex; flex: none; }
.pan button { width: 15px; }
.pan i { width: 15px; margin-left: auto; background: #cdcdcd; }
.tray { display: grid; grid-template-columns: 22px 22px; grid-auto-rows: 21px; padding: 0 7px 0 3px; }
.clock { display: flex; flex-direction: column; align-items: center; padding-top: 11px; line-height: 15px; font-size: 10px; white-space: nowrap; }
.notes { position: relative; height: 44px; }
.notes b { position: absolute; left: 26px; top: 21px; width: 15px; height: 15px; border: 1px solid #999; border-radius: 50%; background: #222; font-size: 10px; line-height: 13px; text-align: center; }
.peek { height: 5px; border-top: 1px solid #666; }
```
FILE: script.js
```js
const columns = 'ABCDEFGHIJKLMNOPQRST'.split('');
const firstRow = 3;
const lastRow = 27;
// row number -> start column, columns covered, text
const texts = {
  4: ['B', 19, 'Over several weeks of normal, or in-control, operation 20 samples of 150 packages each of synthetic-gut tennis strings were tested for breaking strength. A total of 125 packages of the 3000'],
  5: ['B', 6, "tested failed to conform to the manufacturer's specifications."],
  6: ['D', 9, 'a. What is the estimate of the process proportion defective when the system is in control?'],
  7: ['D', 7, 'b. Compute the upper control and the lower control limits for a p-chart.'],
  8: ['D', 16, 'c. With the results of part (b), what conclusion should be made about the process if tests on a new sample of 150 packages find 12 defective? Do there appear to'],
  9: ['D', 4, 'be assignable causes in this situation?', 'indent'],
  10: ['D', 7, 'd. Compute the upper and lower control limits for an np chart?'],
  11: ['D', 5, 'e. Answer part "c" using the results of part (d).'],
  12: ['D', 7, 'f. Which control chart would be preferred in this situation? Why ?']
};
const current = { col: 'D', row: 13 };

let html = '<thead><tr><th class="corner"><svg width="11" height="10"><path d="M11 0v10H0z" fill="#b4b4b4"/></svg></th>';
for (const c of columns) {
  const cls = c === current.col ? 'on' : c === 'T' ? 'last' : '';
  html += `<th scope="col" class="${cls}">${c}</th>`;
}
html += '</tr></thead><tbody>';
for (let r = firstRow; r <= lastRow; r++) {
  html += `<tr><th scope="row" class="${r === current.row ? 'on' : ''}">${r}</th>`;
  for (let i = 0; i < columns.length; i++) {
    const t = texts[r];
    if (t && t[0] === columns[i]) {
      html += `<td colspan="${t[1]}" class="${t[3] || ''}">${t[2]}</td>`;
      i += t[1] - 1;
    } else {
      html += `<td class="${r === current.row && columns[i] === current.col ? 'cur' : ''}"></td>`;
    }
  }
  html += '</tr>';
}
document.getElementById('grid').innerHTML = html + '</tbody>';
```
